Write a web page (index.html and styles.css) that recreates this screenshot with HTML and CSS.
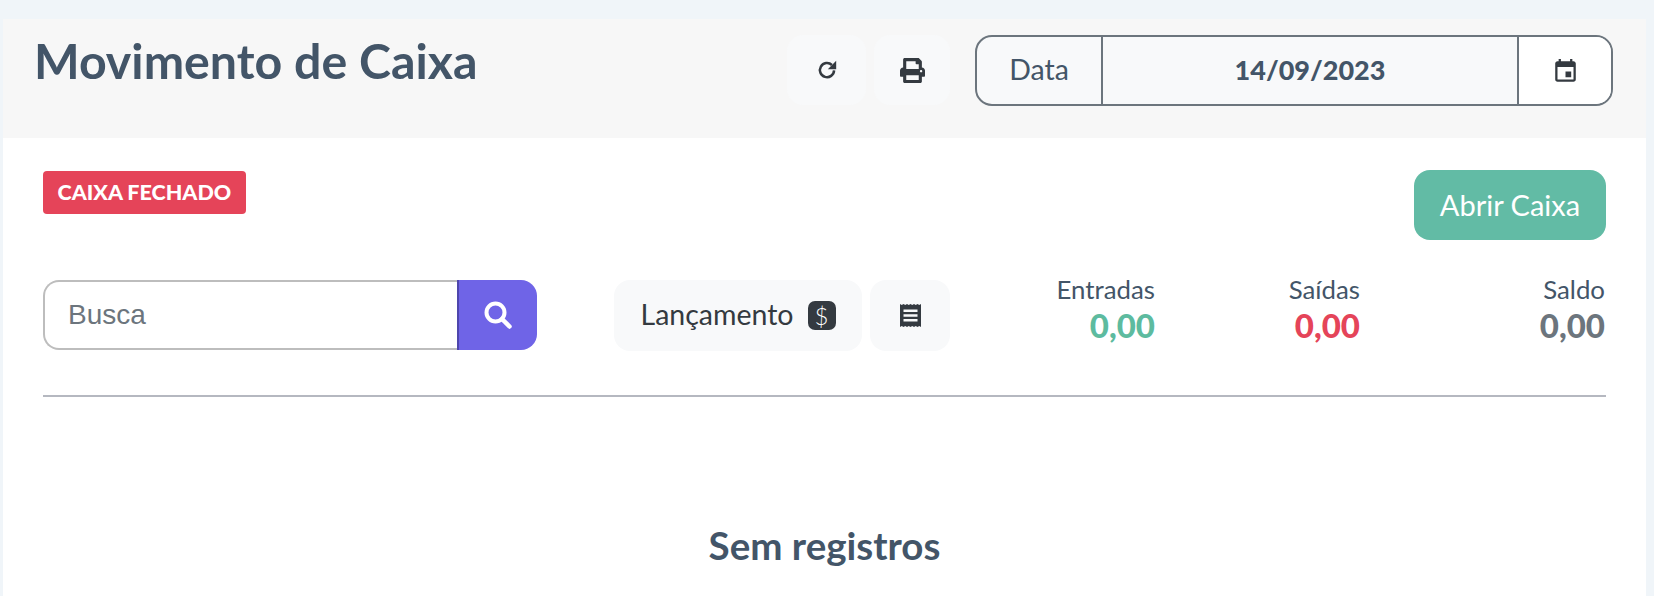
FILE: index.html
```html
<!DOCTYPE html>
<html lang="pt-BR">
<head>
<meta charset="utf-8">
<title>Movimento de Caixa</title>
<link rel="stylesheet" href="styles.css">
</head>
<body>
<main class="card">
  <header class="card-header">
    <h1 class="title">Movimento de Caixa</h1>
    <button class="btn-light btn-refresh" type="button" aria-label="Atualizar">
      <svg class="icon-refresh" viewBox="0 0 24 24"><path fill="none" stroke="#343a40" stroke-width="3" d="M20.500 12.500a8.500 8.500 0 1 1-2.600-6.500"/><path fill="#343a40" d="M23 1v10H13z"/></svg>
    </button>
    <button class="btn-light btn-print" type="button" aria-label="Imprimir">
      <svg class="icon-print" viewBox="0 0 512 512"><path fill="#343a40" d="M448 192V77.250c0-8.490-3.370-16.620-9.370-22.630L393.370 9.370c-6-6-14.140-9.370-22.630-9.370H96C78.330 0 64 14.330 64 32v160c-35.350 0-64 28.650-64 64v112c0 8.840 7.160 16 16 16h48v96c0 17.670 14.330 32 32 32h320c17.670 0 32-14.330 32-32v-96h48c8.840 0 16-7.160 16-16V256c0-35.350-28.650-64-64-64zm-64 256H128v-96h256v96zm0-224H128V64h192v48c0 8.840 7.160 16 16 16h48v96zm48 72c-13.250 0-24-10.750-24-24 0-13.260 10.750-24 24-24s24 10.740 24 24c0 13.250-10.750 24-24 24z"/></svg>
    </button>
    <div class="date-group">
      <span class="date-label">Data</span>
      <span class="date-value">14/09/2023</span>
      <span class="date-icon">
        <svg class="icon-cal" viewBox="3 1 18 21"><path fill="#343a40" d="M17 12h-5v5h5v-5zM16 1v2H8V1H6v2H5c-1.110 0-2 .9-2 2v14c0 1.100.89 2 2 2h14c1.100 0 2-.9 2-2V5c0-1.100-.9-2-2-2h-1V1h-2zm3 18H5V8h14v11z"/></svg>
      </span>
    </div>
  </header>

  <section class="card-body">
    <div class="row-status">
      <span class="badge">CAIXA FECHADO</span>
      <button class="btn-open" type="button">Abrir Caixa</button>
    </div>

    <div class="row-tools">
      <div class="search">
        <input class="search-input" type="text" placeholder="Busca">
        <button class="search-btn" type="button" aria-label="Buscar">
          <svg class="icon-search" viewBox="0 0 28 28"><circle cx="11.500" cy="11.500" r="9" fill="none" stroke="#fff" stroke-width="4"/><path d="M18 18l7.500 7.500" stroke="#fff" stroke-width="4.500" stroke-linecap="round"/></svg>
        </button>
      </div>
      <button class="btn-light btn-launch" type="button"><span class="launch-text">Lançamento</span> <span class="dollar">$</span></button>
      <button class="btn-light btn-receipt" type="button" aria-label="Recibos">
        <svg class="icon-receipt" viewBox="0 0 21 23"><path fill="#343a40" d="M0 0l1.750 1L3.500 0l1.750 1L7 0l1.750 1L10.500 0l1.750 1L14 0l1.750 1L17.500 0l1.750 1L21 0v23l-1.750-1-1.750 1-1.750-1L14 23l-1.750-1-1.750 1-1.750-1L7 23l-1.750-1-1.750 1-1.750-1L0 23z"/><path fill="#f8f9fa" d="M3.500 5.500h14v2.500h-14zM3.500 10.300h14v2.500h-14zM3.500 15h14v2.500h-14z"/></svg>
      </button>
      <div class="stats">
        <div class="stat"><span class="stat-label">Entradas</span><strong class="stat-value green">0,00</strong></div>
        <div class="stat"><span class="stat-label">Saídas</span><strong class="stat-value red">0,00</strong></div>
        <div class="stat stat-wide"><span class="stat-label">Saldo</span><strong class="stat-value gray">0,00</strong></div>
      </div>
    </div>

    <hr class="divider">

    <h2 class="empty">Sem registros</h2>
  </section>
</main>
</body>
</html>
```

FILE: styles.css
```css
* { box-sizing: border-box; }

html, body { height: 100%; }

body {
  margin: 0;
  background: #f0f5f9;
  font-family: "Lato", "Noto Sans", sans-serif;
  color: #435568;
  overflow: hidden;
}

button { font-family: inherit; border: 0; padding: 0; cursor: pointer; }

.card {
  margin: 19px 8px 0 3px;
  height: 577px;
  background: #fff;
}

.card-header {
  display: flex;
  height: 119px;
  padding: 16px 33px 0 31px;
  background: #f7f7f7;
}

.title {
  margin: 0 auto 0 0;
  font-size: 48.300px;
  line-height: 50px;
  font-weight: 700;
  color: #435568;
}

.btn-light {
  display: flex;
  align-items: center;
  justify-content: center;
  height: 70px;
  background: #f8f9fa;
  border-radius: 16px;
  color: #343a40;
}

.btn-refresh { width: 79px; margin-right: 8px; }
.btn-print { width: 76px; margin-right: 25px; }

.icon-refresh { width: 20px; height: 20px; }
.icon-print { width: 25px; height: 25px; }

.date-group {
  display: flex;
  width: 638px;
  height: 71px;
  border: 2px solid #6c757d;
  border-radius: 17px;
  background: #f8f9fa;
  overflow: hidden;
}

.date-label {
  display: flex;
  align-items: center;
  justify-content: center;
  width: 126px;
  padding-bottom: 3px;
  border-right: 2px solid #6c757d;
  font-size: 28.500px;
}

.date-value {
  display: flex;
  flex: 1;
  align-items: center;
  justify-content: center;
  padding-bottom: 3px;
  font-size: 27px;
  font-weight: 900;
}

.date-icon {
  display: flex;
  align-items: center;
  justify-content: center;
  width: 94px;
  border-left: 2px solid #6c757d;
  background: #fff;
}

.icon-cal { width: 21px; height: 24px; }

.card-body { padding: 32px 40px 0; }

.row-status {
  display: flex;
  align-items: flex-start;
  justify-content: space-between;
}

.badge {
  margin-top: 1px;
  padding: 0 14.500px;
  height: 43px;
  line-height: 43px;
  border-radius: 4px;
  background: #e54459;
  color: #fff;
  font-size: 21.500px;
  font-weight: 900;
  white-space: nowrap;
}

.btn-open {
  width: 192px;
  height: 70px;
  padding-bottom: 2px;
  border-radius: 16px;
  background: #62bba5;
  color: #fff;
  font-size: 29px;
}

.row-tools {
  display: flex;
  margin-top: 40px;
  height: 71px;
}

.search {
  display: flex;
  width: 494px;
  height: 70px;
}

.search-input {
  flex: 1;
  min-width: 0;
  height: 70px;
  padding: 0 23px;
  border: 2px solid #bdbdbd;
  border-right: 0;
  border-radius: 16px 0 0 16px;
  outline: 0;
  background: #fff;
  font-family: "Liberation Sans", Arial, sans-serif;
  font-size: 28px;
}

.search-input::placeholder { color: #6c757d; opacity: 1; }

.search-btn {
  display: flex;
  align-items: center;
  justify-content: center;
  width: 80px;
  border-left: 2px solid #4e46ad;
  border-radius: 0 16px 16px 0;
  background: #6f64e7;
}

.icon-search { width: 28px; height: 28px; }

.btn-launch {
  gap: 14px;
  width: 248px;
  height: 71px;
  margin-left: 77px;
  font-size: 28.500px;
}

.launch-text { margin-top: -3px; }

.dollar {
  display: flex;
  align-items: center;
  justify-content: center;
  width: 28px;
  height: 29px;
  border-radius: 7px;
  background: #343a40;
  color: #fff;
  font-size: 24px;
  font-weight: 300;
}

.btn-receipt {
  width: 80px;
  height: 71px;
  margin-left: 8px;
}

.icon-receipt { width: 21px; height: 23px; }

.stats {
  display: flex;
  width: 655px;
}

.stat {
  display: flex;
  flex-direction: column;
  align-items: flex-end;
  width: 205px;
}

.stat-wide { width: 245px; }

.stat-label {
  font-size: 25.800px;
  line-height: 18px;
}

.stat-value {
  margin-top: 7px;
  font-size: 33px;
  line-height: 40px;
  font-weight: 900;
}

.green { color: #5dbb9f; }
.red { color: #e54459; }
.gray { color: #6c757d; }

.divider {
  height: 2px;
  margin: 44px 0 0;
  border: 0;
  background: #b5b8c0;
}

.empty {
  margin: 126px 0 0;
  text-align: center;
  font-size: 38.500px;
  line-height: 44px;
  font-weight: 700;
  color: #435568;
}
```
